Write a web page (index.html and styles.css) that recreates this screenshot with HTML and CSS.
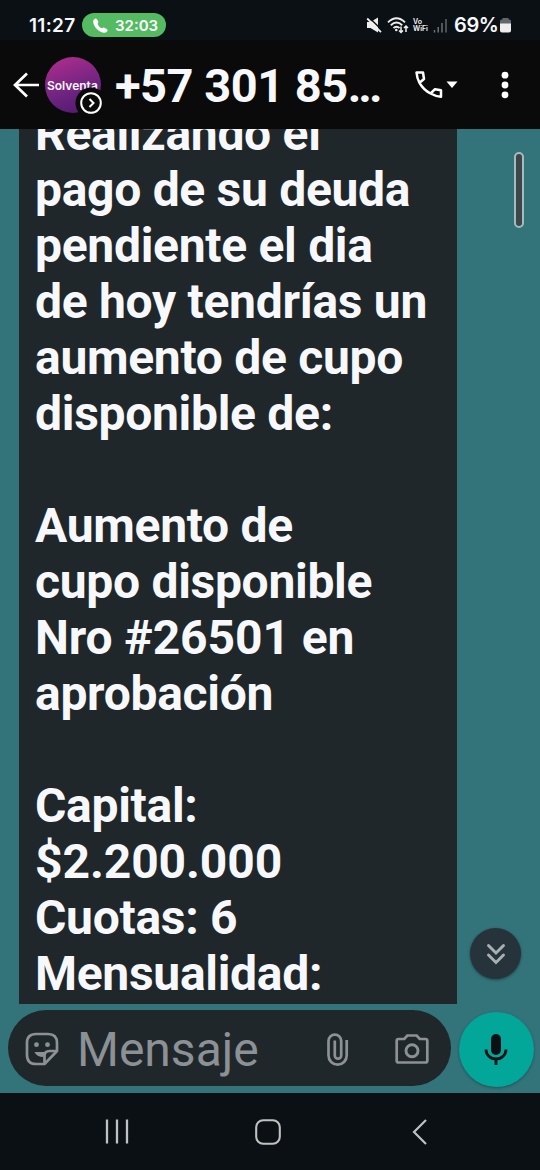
FILE: index.html
```html
<!DOCTYPE html>
<html lang="es">
<head>
  <meta charset="UTF-8">
  <title>Chat</title>
  <link rel="stylesheet" href="styles.css">
</head>
<body>
  <div class="status-bar">
    <span class="clock">11:27</span>
    <div class="call-pill">
      <svg width="15" height="15" viewBox="0 0 15 15"><path d="M1 1.200C2 .2 3.400 .3 4 1.200L5.300 3.700C5.700 4.600 4.600 5.300 4.700 6C5.200 7.800 7.200 9.800 9 10.300C9.800 10.500 10.400 9.200 11.300 9.700L13.800 11C14.800 11.600 14.800 12.800 13.900 13.800C11.500 15.700 7 14.200 3.800 11C.5 7.700-.8 3.500 1 1.200Z" fill="#fff"/></svg>
      <span>32:03</span>
    </div>
    <div class="status-icons">
      <svg width="16" height="16" viewBox="0 0 16 16"><path d="M1 5h3.500L12 .5v15L4.500 11H1z" fill="#eee"/><path d="M2.700 0l14 14" stroke="#0b1014" stroke-width="1.400"/><path d="M1.200 1.500l13.800 13.600" stroke="#eee" stroke-width="1.800"/></svg>
      <svg class="wifi" width="22" height="17" viewBox="0 0 22 17"><g fill="none" stroke="#eee" stroke-width="1.900"><path d="M1 5.400Q9.500-2.700 18 5.400M3.800 8.200q5.700-5.200 11.400 0M6.500 11q3-2.600 6 0"/></g><circle cx="9.300" cy="13" r="1.300" fill="#eee"/><path d="M14 9.500v6m-2-2l2 2 2-2M19 15v-6m-2 2l2-2 2 2" fill="none" stroke="#eee" stroke-width="1.500"/></svg>
      <div class="vowifi"><span>Vo</span><span>WiFi</span></div>
      <svg class="signal" width="15" height="15" viewBox="0 0 15 15"><path d="M1.500 12v2.500M5.200 9v5.500M9 5v9.500" stroke="#70767a" stroke-width="1.400"/><path d="M13 1v13.500" stroke="#555b5f" stroke-width="1.700"/></svg>
      <span class="percent">69%</span>
      <svg class="battery" width="11" height="15" viewBox="0 0 11 15"><path d="M2.500 0h6v1.500h1q1.500 0 1.500 1.500v3H0V3q0-1.500 1.500-1.500h1z" fill="#63676a"/><path d="M0 5.500h11v7q0 2-2 2H2q-2 0-2-2z" fill="#eee"/></svg>
    </div>
  </div>

  <div class="header">
    <svg class="back" width="26" height="26" viewBox="0 0 26 26"><path d="M26 13H2M14 1.500L2 13l12 11.500" fill="none" stroke="#fff" stroke-width="2.700"/></svg>
    <div class="avatar">
      <span>Solventa</span>
      <!-- Insignia sobre la foto de perfil -->
      <svg class="badge" width="32" height="32" viewBox="0 0 32 32"><circle cx="16" cy="16" r="15.500" fill="#0a0a0a"/><circle cx="16" cy="16" r="9.800" fill="none" stroke="#fff" stroke-width="2"/><path d="M14.500 12l4 4-4 4" fill="none" stroke="#fff" stroke-width="2"/></svg>
    </div>
    <h1>+57 301 85<span>...</span></h1>
    <svg class="call" width="43" height="28" viewBox="0 0 43 28"><path d="M1.500 1.500H8L9 8L4.500 11.800Q2 7.500 1.500 1.500ZM4.500 11.800Q8.500 18.800 15.600 22.500M15.600 22.500L20 18.200L26 19.300V25.800Q20.300 25.200 15.600 22.500Z" fill="none" stroke="#fff" stroke-width="2.500" stroke-linejoin="round"/><path d="M31.500 10.500h11l-5.500 6.500z" fill="#fff"/></svg>
    <svg class="more" width="8" height="28" viewBox="0 0 8 28"><g fill="#fff"><circle cx="4" cy="4.200" r="3.400"/><circle cx="4" cy="14" r="3.400"/><circle cx="4" cy="23.800" r="3.400"/></g></svg>
  </div>

  <div class="chat">
    <div class="messages">
      <div class="bubble">
        <p>Realizando el<br>pago de su deuda<br>pendiente el dia<br>de hoy tendrías un<br>aumento de cupo<br>disponible de:</p>
        <p>Aumento de<br>cupo disponible<br><span class="amount">Nro #26501 en</span><br>aprobación</p>
        <p>Capital:<br><span class="amount">$2.200.000</span><br>Cuotas: 6<br>Mensualidad:</p>
      </div>
    </div>
    <div class="scrollbar"></div>
    <div class="scroll-down">
      <svg width="20" height="22" viewBox="0 0 20 22"><path d="M2.500 2.500l7.500 7.500 7.500-7.500M2.500 12l7.500 7.500 7.500-7.500" fill="none" stroke="#a9b0b5" stroke-width="2.900" stroke-linecap="round"/></svg>
    </div>
    <div class="composer">
      <div class="input">
        <svg class="sticker" width="34" height="34" viewBox="0 0 34 34"><g fill="none" stroke="#8b9195" stroke-width="2.700" stroke-linejoin="round"><path d="M11 2h12q9 0 9 9v8L19.500 32H11q-9 0-9-9V11q0-9 9-9z"/><path d="M19.500 32v-8q0-5 5-5H32"/></g><circle cx="11.500" cy="12.700" r="2.400" fill="#8b9195"/><circle cx="22.500" cy="12.700" r="2.400" fill="#8b9195"/><path d="M9.500 20h10.500q-1.500 2-1.500 5-7 0-9-5z" fill="#8b9195"/></svg>
        <span class="placeholder">Mensaje</span>
        <svg class="clip" width="22" height="33" viewBox="0 0 22 33"><path d="M19.700 7v15.500a9.100 9.100 0 0 1-18.200 0V8a6.300 6.300 0 0 1 12.700 0v14.500a3.200 3.200 0 0 1-6.400 0V7.500" fill="none" stroke="#8b9195" stroke-width="2.700"/></svg>
        <svg class="camera" width="34" height="30" viewBox="0 0 34 30"><path d="M3.500 5h5.800l3-3.500h9.400l3 3.500h5.800q1.800 0 1.800 1.800v19.900q0 1.800-1.800 1.800h-27q-1.800 0-1.800-1.800V6.800Q1.700 5 3.500 5z" fill="none" stroke="#8b9195" stroke-width="2.700"/><circle cx="17" cy="16.700" r="6" fill="none" stroke="#8b9195" stroke-width="2.900"/></svg>
      </div>
      <div class="mic">
        <svg width="24" height="32" viewBox="0 0 24 32"><rect x="7" y="0" width="10" height="21" rx="5" fill="#0b1014"/><path d="M2 15.500a10 9.500 0 0 0 20 0M12 25v6" fill="none" stroke="#0b1014" stroke-width="2.800"/></svg>
      </div>
    </div>
  </div>

  <div class="nav-bar">
    <svg width="24" height="25" viewBox="0 0 24 25"><path d="M2 .5v24M12 .5v24M22 .5v24" stroke="#bfc1c2" stroke-width="2.300"/></svg>
    <svg class="home" width="26" height="26" viewBox="0 0 26 26"><rect x="1.200" y="1.200" width="23.600" height="23.600" rx="7" fill="none" stroke="#bfc1c2" stroke-width="2.100"/></svg>
    <svg width="15" height="26" viewBox="0 0 15 26"><path d="M14 1L2 13l12 12" fill="none" stroke="#bfc1c2" stroke-width="2.200"/></svg>
  </div>
</body>
</html>
```

FILE: styles.css
```css
body {
  font-family: Roboto, sans-serif;
  margin: 0;
  height: 1170px;
  display: flex;
  flex-direction: column;
  overflow: hidden;
  background-color: #0b1014;
  color: #f7f8fc;
}

svg {
  display: block;
  flex-shrink: 0;
}

/* Barra de estado */
.status-bar {
  height: 40px;
  box-sizing: border-box;
  padding: 10px 29px 0 29px;
  display: flex;
  align-items: center;
  font-family: Inter, sans-serif;
  font-weight: 600;
}

.clock {
  width: 53px;
  font-size: 19px;
  letter-spacing: 0.3px;
}

.call-pill {
  width: 84px;
  height: 24px;
  box-sizing: border-box;
  padding-left: 11px;
  display: flex;
  align-items: center;
  gap: 7px;
  border-radius: 12px;
  background-color: #54bb63;
  color: #fff;
  font-size: 15px;
}

.status-icons {
  margin-left: auto;
  display: flex;
  align-items: center;
}

.wifi {
  margin-left: 5px;
}

.vowifi {
  width: 15px;
  margin-left: 4px;
  display: flex;
  flex-direction: column;
  font-size: 7px;
  line-height: 7px;
}

.signal {
  margin-left: 5px;
}

.percent {
  margin-left: 6px;
  width: 44px;
  font-size: 20px;
  letter-spacing: -0.4px;
}

.battery {
  margin-left: 2px;
}

/* Encabezado del chat */
.header {
  height: 89px;
  box-sizing: border-box;
  padding: 0 31px 0 13px;
  display: flex;
  align-items: center;
  background-color: #0a0a0a;
}

.avatar {
  position: relative;
  width: 56px;
  height: 56px;
  margin-left: 6px;
  border-radius: 50%;
  background: linear-gradient(160deg, #a82c8c 10%, #6c2380 60%, #4a1a68);
}

.avatar span {
  display: block;
  padding-left: 2px;
  font-family: Inter, sans-serif;
  font-size: 12px;
  font-weight: 600;
  line-height: 57px;
  white-space: nowrap;
}

.badge {
  position: absolute;
  left: 30px;
  top: 30px;
}

h1 {
  margin: 2px 0 0 14px;
  width: 300px;
  font-size: 47px;
  line-height: 56px;
  letter-spacing: -0.5px;
  font-weight: bold;
  white-space: nowrap;
}

h1 span {
  letter-spacing: -3px;
}

.more {
  margin-left: auto;
}

/* Conversación */
.chat {
  position: relative;
  height: 964px;
  display: flex;
  flex-direction: column;
  background-color: #32747a;
}

.messages {
  height: 875px;
  overflow: hidden;
}

.bubble {
  width: 438px;
  height: 875px;
  box-sizing: border-box;
  margin-left: 19px;
  padding-left: 16px;
  background-color: #20272a;
  overflow: hidden;
}

.bubble p {
  margin: 0 0 56px;
  font-size: 48px;
  line-height: 56px;
  letter-spacing: -0.3px;
  font-weight: bold;
  white-space: nowrap;
}

.bubble p:first-child {
  margin-top: -23px;
}

.bubble .amount {
  letter-spacing: -0.1px;
}

.scrollbar {
  position: absolute;
  right: 16px;
  top: 23px;
  width: 10px;
  height: 76px;
  box-sizing: border-box;
  border: 2px solid #a3bcc0;
  border-radius: 5px;
  background-color: #404548;
}

.scroll-down {
  position: absolute;
  right: 19px;
  top: 799px;
  width: 51px;
  height: 51px;
  display: flex;
  align-items: center;
  justify-content: center;
  border-radius: 50%;
  background-color: #27333a;
  box-shadow: 0 1px 3px rgba(0, 0, 0, 0.4);
}

/* Caja para escribir el mensaje */
.composer {
  display: flex;
  gap: 7.5px;
  padding: 6px 6px 0 8px;
}

.input {
  width: 443px;
  height: 76px;
  box-sizing: border-box;
  padding: 2px 22px 0 17px;
  display: flex;
  align-items: center;
  border-radius: 38px;
  background-color: #20272a;
}

.placeholder {
  margin-left: 18px;
  font-size: 48px;
  color: #8b9195;
}

.clip {
  margin-left: auto;
}

.camera {
  margin-left: 46px;
}

.mic {
  width: 75px;
  height: 75px;
  margin-top: 2px;
  display: flex;
  align-items: center;
  justify-content: center;
  border-radius: 50%;
  background-color: #03a79a;
  box-shadow: 0 1px 3px rgba(0, 0, 0, 0.3);
}

/* Botones del sistema */
.nav-bar {
  height: 77px;
  padding-left: 105px;
  display: flex;
  align-items: center;
}

.home {
  margin: 0 131px 0 126px;
}
```
